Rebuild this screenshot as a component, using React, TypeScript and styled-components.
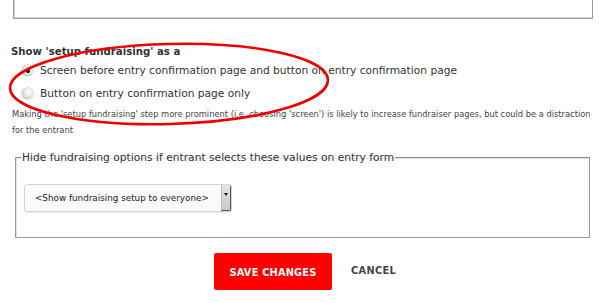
import React from 'react'
import styled, { createGlobalStyle } from 'styled-components'

const GlobalStyle = createGlobalStyle`
  html, body {
    margin: 0;
    padding: 0;
    background: #fff;
  }
  body {
    font-family: "DejaVu Sans", "Liberation Sans", sans-serif;
    color: #333;
    overflow: hidden;
  }
`

const Page = styled.div`
  position: relative;
  width: 600px;
  height: 303px;
`

const TopBox = styled.div`
  margin-left: 13px;
  width: 578px;
  height: 18px;
  border: 1px solid #9a9a9a;
  border-top: none;
  box-shadow: inset 1px -1px 0 #d6d6d6;
`

const Section = styled.div`
  padding: 0 0 0 11px;
`

const Heading = styled.div`
  margin-top: 26px;
  font-size: 10.2px;
  font-weight: bold;
  color: #333;
  line-height: 14px;
`

const RadioRow = styled.label`
  display: flex;
  align-items: center;
  gap: 7px;
  margin-left: 11px;
  height: 23px;
  font-size: 10.65px;
  color: #333;
`

const Radio = styled.span<{ $checked?: boolean }>`
  position: relative;
  width: 11px;
  height: 11px;
  border-radius: 50%;
  background: radial-gradient(circle at 65% 30%, #ffffff 0%, #e4e4e4 50%, #b4b4b4 100%);
  box-shadow: 0 0 0 0.5px #a8a8a8;
  &::after {
    content: '';
    display: ${p => (p.$checked ? 'block' : 'none')};
    position: absolute;
    left: 3.5px;
    top: 3.5px;
    width: 4px;
    height: 4px;
    border-radius: 50%;
    background: #000;
  }
`

const Help = styled.p`
  margin: 1px 0 0 1px;
  font-size: 8.3px;
  line-height: 16px;
  color: #444;
  white-space: nowrap;
`

const Fieldset = styled.fieldset`
  margin: 13px 0 0 15px;
  width: 575px;
  height: 87px;
  box-sizing: border-box;
  padding: 0 0 0 5px;
  border: 1px solid #9a9a9a;
  border-top-color: #8a8a8a;
  box-shadow: inset 1px 1px 0 #e2e2e2;
`

const Legend = styled.legend`
  padding: 0 1px;
  margin-left: 0;
  font-size: 10.7px;
  color: #333;
`

const SelectBox = styled.div`
  display: flex;
  align-items: stretch;
  margin: 20px 0 0 3px;
  width: 208px;
  height: 28px;
  box-sizing: border-box;
  border: 1px solid #d4d4d4;
  border-radius: 3px;
  background: #fafafa;
  box-shadow: 0 1px 1px rgba(0, 0, 0, 0.08);
  overflow: hidden;
`

const SelectText = styled.span`
  flex: 1;
  display: flex;
  align-items: center;
  padding-left: 10px;
  font-family: "DejaVu Sans", sans-serif;
  font-size: 8.8px;
  color: #222;
  white-space: nowrap;
`

const SelectArrow = styled.span`
  width: 10px;
  display: flex;
  align-items: flex-start;
  justify-content: center;
  padding-top: 8px;
  box-sizing: border-box;
  background: linear-gradient(#e6e6e6, #c8c8c8);
  border-left: 1px solid #bbb;
  border-right: 1px solid #555;
  border-bottom: 1px solid #555;
  &::before {
    content: '';
    border-left: 2.5px solid transparent;
    border-right: 2.5px solid transparent;
    border-top: 3px solid #111;
  }
`

const Actions = styled.div`
  display: flex;
  align-items: center;
  margin: 15px 0 0 214px;
  gap: 19px;
`

const SaveButton = styled.button`
  width: 118px;
  height: 37px;
  border: none;
  border-radius: 2px;
  background: #ff0000;
  color: #fff;
  font-family: "DejaVu Sans", sans-serif;
  font-weight: bold;
  font-size: 9.8px;
  letter-spacing: 0.2px;
  padding: 2px 0 0;
  cursor: pointer;
`

const CancelLink = styled.span`
  font-size: 9.8px;
  font-weight: bold;
  color: #444;
  letter-spacing: 0.35px;
  margin-top: -2px;
`

const Annotation = styled.svg`
  position: absolute;
  left: 0;
  top: 0;
  pointer-events: none;
`

export default function App() {
  return (
    <Page>
      <GlobalStyle />
      <TopBox />
      <Section>
        <Heading>Show 'setup fundraising' as a</Heading>
        <RadioRow>
          <Radio $checked />
          Screen before entry confirmation page and button on entry confirmation page
        </RadioRow>
        <RadioRow>
          <Radio />
          Button on entry confirmation page only
        </RadioRow>
        <Help>
          Making the 'setup fundraising' step more prominent (i.e. choosing 'screen') is likely to
          increase fundraiser pages, but could be a distraction
          <br />
          for the entrant
        </Help>
      </Section>
      <Fieldset>
        <Legend>Hide fundraising options if entrant selects these values on entry form</Legend>
        <SelectBox>
          <SelectText>&lt;Show fundraising setup to everyone&gt;</SelectText>
          <SelectArrow />
        </SelectBox>
      </Fieldset>
      <Actions>
        <SaveButton>SAVE CHANGES</SaveButton>
        <CancelLink>CANCEL</CancelLink>
      </Actions>
      <Annotation width="600" height="303" viewBox="0 0 600 303">
        <ellipse
          cx="169"
          cy="84"
          rx="159"
          ry="40"
          transform="rotate(-1.5 169 84)"
          fill="none"
          stroke="#ee0000"
          strokeWidth="2.6"
        />
      </Annotation>
    </Page>
  )
}
